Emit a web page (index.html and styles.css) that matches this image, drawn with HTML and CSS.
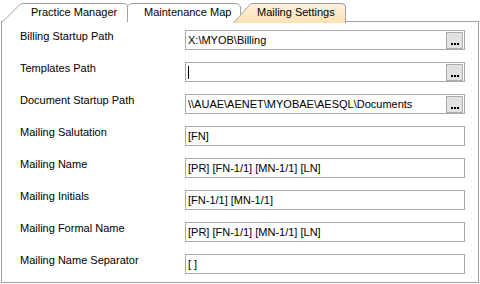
FILE: index.html
```html
<!DOCTYPE html>
<html lang="en">
<head>
    <meta charset="UTF-8">
    <title>Mailing Settings</title>
    <link rel="stylesheet" href="styles.css">
</head>
<body>
    <div class="tabs">
        <div class="tab tab-first">
            <svg class="tab-shape" width="126" height="19" viewBox="0 0 126 19">
                <path d="M0.5 19 L17.5 2 Q19 0.5 21 0.5 L122 0.5 Q125.5 0.5 125.5 4 L125.5 19" fill="#fff" stroke="#a0a0a0"/>
            </svg>
            <span class="tab-label">Practice Manager</span>
        </div>
        <div class="tab tab-second">
            <svg class="tab-shape" width="130" height="19" viewBox="0 0 130 19">
                <path d="M0.5 19 L17.5 2 Q19 0.5 21 0.5 L125 0.5 Q128.5 0.5 129.5 4 L129.5 19" fill="#fff" stroke="#a0a0a0"/>
            </svg>
            <span class="tab-label">Maintenance Map</span>
        </div>
        <div class="tab tab-active">
            <svg class="tab-shape" width="113" height="20" viewBox="0 0 113 20">
                <defs>
                    <linearGradient id="active-fill" x1="0" y1="0" x2="0" y2="1">
                        <stop offset="0" stop-color="#fff1da"/>
                        <stop offset="1" stop-color="#fde2b3"/>
                    </linearGradient>
                </defs>
                <path d="M0.5 20 L16.5 2 Q18 0.5 20 0.5 L109 0.5 Q112.5 0.5 112.5 4 L112.5 20" fill="url(#active-fill)" stroke="#a0a0a0"/>
            </svg>
            <span class="tab-label">Mailing Settings</span>
        </div>
    </div>

    <div class="panel">
        <div class="row">
            <label>Billing Startup Path</label>
            <div class="field">
                <span class="value">X:\MYOB\Billing</span>
                <span class="browse"><svg width="15" height="15" viewBox="0 0 15 15"><rect x="4" y="10" width="2" height="2"/><rect x="7" y="10" width="2" height="2"/><rect x="10" y="10" width="2" height="2"/></svg></span>
            </div>
        </div>
        <div class="row">
            <label>Templates Path</label>
            <div class="field">
                <span class="value"><span class="caret"></span></span>
                <span class="browse"><svg width="15" height="15" viewBox="0 0 15 15"><rect x="4" y="10" width="2" height="2"/><rect x="7" y="10" width="2" height="2"/><rect x="10" y="10" width="2" height="2"/></svg></span>
            </div>
        </div>
        <div class="row">
            <label>Document Startup Path</label>
            <div class="field">
                <span class="value">\\AUAE\AENET\MYOBAE\AESQL\Documents</span>
                <span class="browse"><svg width="15" height="15" viewBox="0 0 15 15"><rect x="4" y="10" width="2" height="2"/><rect x="7" y="10" width="2" height="2"/><rect x="10" y="10" width="2" height="2"/></svg></span>
            </div>
        </div>
        <div class="row">
            <label>Mailing Salutation</label>
            <div class="field"><span class="value">[FN]</span></div>
        </div>
        <div class="row">
            <label>Mailing Name</label>
            <div class="field"><span class="value">[PR] [FN-1/1] [MN-1/1] [LN]</span></div>
        </div>
        <div class="row">
            <label>Mailing Initials</label>
            <div class="field"><span class="value">[FN-1/1] [MN-1/1]</span></div>
        </div>
        <div class="row">
            <label>Mailing Formal Name</label>
            <div class="field"><span class="value">[PR] [FN-1/1] [MN-1/1] [LN]</span></div>
        </div>
        <div class="row">
            <label>Mailing Name Separator</label>
            <div class="field"><span class="value">[ ]</span></div>
        </div>
    </div>
</body>
</html>
```

FILE: styles.css
```css
* {
    margin: 0;
    padding: 0;
    box-sizing: border-box;
    font-family: 'Liberation Sans', Arial, sans-serif;
}

body {
    background-color: #fff;
    width: 480px;
    height: 284px;
    color: #000;
    font-size: 11px;
}

.tabs {
    display: flex;
    height: 22px;
    padding: 3px 0 0 2px;
}

.tab {
    position: relative;
    height: 19px;
    line-height: 18px;
}

.tab-shape {
    position: absolute;
    left: 0;
    top: 0;
    display: block;
}

.tab-label {
    position: relative;
    display: block;
    white-space: nowrap;
}

.tab-first {
    width: 126px;
    padding-left: 29px;
    z-index: 3;
}

.tab-second {
    width: 130px;
    margin-left: -17px;
    padding-left: 33px;
    z-index: 2;
}

.tab-active {
    width: 113px;
    margin-left: -8px;
    padding-left: 24px;
    height: 20px;
    z-index: 4;
}

.panel {
    margin: -1px 1px 0 1px;
    width: 478px;
    height: 262px;
    border: 1px solid #a0a0a0;
    padding: 8px 0 0 18px;
    display: flex;
    flex-direction: column;
    gap: 12px;
}

.row {
    display: flex;
    align-items: flex-start;
    height: 20px;
}

.row label {
    width: 165px;
    line-height: 12px;
}

.field {
    width: 280px;
    height: 20px;
    border: 1px solid #a9a9a9;
    background-color: #fff;
    display: flex;
    align-items: center;
    padding: 0 1px 0 2px;
}

.value {
    flex: 1;
    white-space: nowrap;
    overflow: hidden;
    line-height: 16px;
}

.caret {
    display: inline-block;
    width: 1px;
    height: 13px;
    margin-top: 2px;
    background-color: #000;
    vertical-align: top;
}

.browse {
    width: 17px;
    height: 17px;
    border: 1px solid #adadad;
    background-color: #e1e1e1;
}

.browse svg {
    display: block;
}
```
